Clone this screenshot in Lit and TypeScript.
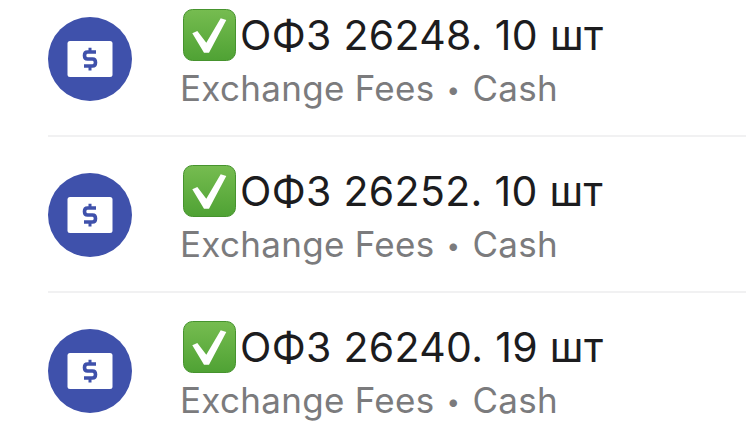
import { LitElement, html, css, svg } from "lit";
import { customElement } from "lit/decorators.js";

const rows = ["ОФЗ 26248. 10 шт", "ОФЗ 26252. 10 шт", "ОФЗ 26240. 19 шт"];

const checkIcon = svg`<svg class="check" viewBox="0 0 53 52" aria-hidden="true">
  <defs>
    <linearGradient id="g" x1="0" y1="0" x2="0" y2="1">
      <stop offset="0" stop-color="#76bc50"/>
      <stop offset="1" stop-color="#4fa234"/>
    </linearGradient>
  </defs>
  <rect x="0.5" y="0.5" width="52" height="51" rx="9" fill="url(#g)" stroke="#46932e"/>
  <path d="M9.3 24.3 L14.3 22 L23.3 33.7 L37.7 9.3 L43.3 11 L26 43.7 L21 43.7 Z" fill="#fff"/>
</svg>`;

const moneyIcon = svg`<svg class="money" viewBox="0 0 84 84" aria-hidden="true">
  <circle cx="42" cy="42" r="42" fill="#3f51ab"/>
  <rect x="19.5" y="24" width="45" height="36" rx="2.5" fill="#fff"/>
  <path d="M48 35 H39.5 Q36.5 35 36.5 38.5 Q36.5 42 39.5 42 H44.5 Q47.5 42 47.5 45.5 Q47.5 49 44.5 49 H36" fill="none" stroke="#3f51ab" stroke-width="3.6"/>
  <path d="M42 30.7 V35 M42 49 V53.5" fill="none" stroke="#3f51ab" stroke-width="3"/>
</svg>`;

@customElement("app-root")
export class AppRoot extends LitElement {
  static styles = css`
    :host {
      display: block;
      width: 746px;
      height: 431px;
      overflow: hidden;
      background: #fff;
      font-family: "Inter", "Liberation Sans", sans-serif;
    }
    .list {
      margin-top: -19px;
      padding-left: 48px;
    }
    .row {
      display: flex;
      height: 156px;
      box-sizing: border-box;
      border-bottom: 2px solid #f1f1f2;
      gap: 49px;
      align-items: flex-start;
    }
    .money {
      width: 84px;
      height: 84px;
      margin-top: 36px;
      flex: none;
    }
    .text {
      display: flex;
      flex-direction: column;
      margin-top: 28px;
    }
    .title {
      display: flex;
      align-items: center;
      height: 52px;
      margin-left: 2px;
      gap: 4px;
      font-size: 41px;
      letter-spacing: 0.33px;
      color: #1c1c1e;
      white-space: nowrap;
    }
    .check {
      width: 53px;
      height: 52px;
      flex: none;
    }
    .sub {
      margin-top: 7px;
      margin-left: -1px;
      font-size: 35px;
      letter-spacing: 0.3px;
      line-height: 40px;
      color: #7b7b7d;
      white-space: nowrap;
    }
    .dot {
      font-size: 24px;
      margin: 0 12px;
      vertical-align: 3px;
    }
  `;

  render() {
    return html`<div class="list">
      ${rows.map(
        (t) => html`<div class="row">
          ${moneyIcon}
          <div class="text">
            <div class="title">${checkIcon}<span>${t}</span></div>
            <div class="sub">Exchange Fees<span class="dot">•</span>Cash</div>
          </div>
        </div>`
      )}
    </div>`;
  }
}
